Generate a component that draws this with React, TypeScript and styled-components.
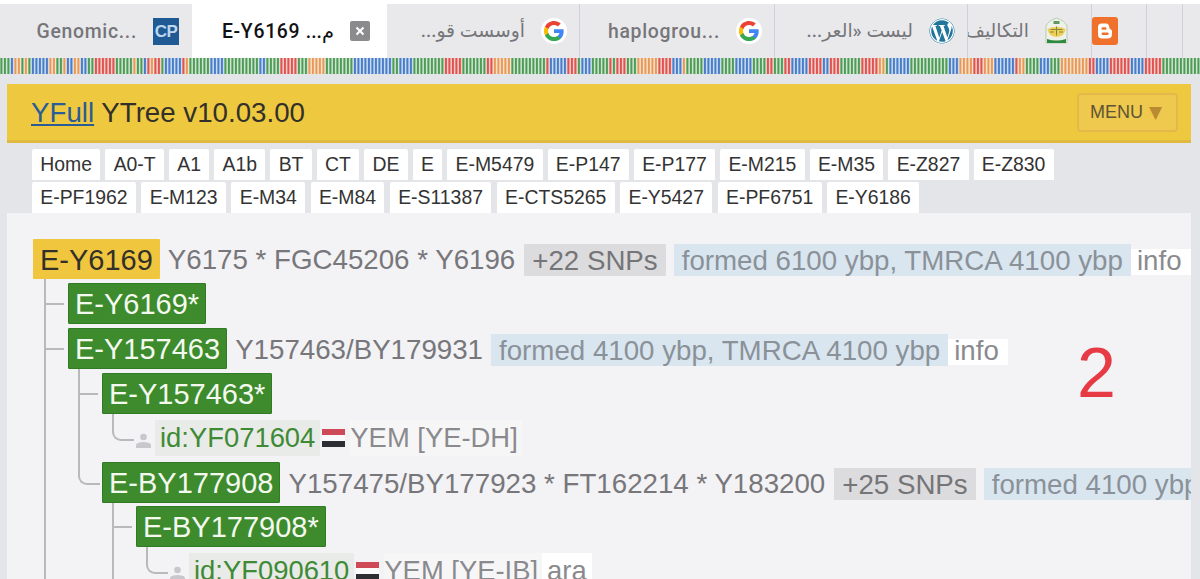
import React from "react";
import styled, { createGlobalStyle } from "styled-components";
import { FaWordpress } from "react-icons/fa";

const Global = createGlobalStyle`
  html, body { margin: 0; padding: 0; background: #e4e5e8; }
  body { font-family: "Liberation Sans", Arial, sans-serif; overflow: hidden; }
  * { box-sizing: border-box; }
`;

const Page = styled.div`
  width: 1200px;
  height: 579px;
  display: flex;
  flex-direction: column;
  overflow: hidden;
  background: #e4e5e8;
  padding-top: 4px;
  position: relative;
  &::before {
    content: "";
    position: absolute;
    top: 0;
    left: 0;
    right: 0;
    height: 4px;
    background: #fff;
  }
`;

/* ---------- browser tabs ---------- */
const TabBar = styled.div`
  display: flex;
  height: 54px;
  flex: none;
  background: #e9e9ec;
`;
const Tab = styled.div<{ $w: number; $pr: number; $active?: boolean; $sep?: boolean }>`
  flex: 0 0 ${(p) => p.$w}px;
  height: 54px;
  padding-right: ${(p) => p.$pr}px;
  display: flex;
  align-items: center;
  justify-content: flex-end;
  gap: 16px;
  overflow: hidden;
  background: ${(p) => (p.$active ? "#ffffff" : "transparent")};
  border-right: ${(p) => (p.$sep ? "1px solid #d2d2d6" : "none")};
`;
const TabLabel = styled.span<{ $active?: boolean; $arabic?: boolean }>`
  flex: none;
  font-family: Roboto, "Noto Sans", "DejaVu Sans", sans-serif;
  font-weight: 500;
  font-size: ${(p) => (p.$arabic ? 18.8 : 19.4)}px;
  letter-spacing: ${(p) => (p.$arabic ? 0 : 0.7)}px;
  white-space: nowrap;
  color: ${(p) => (p.$active ? "#111114" : "#76767a")};
`;
const FaviconCP = styled.div`
  flex: none;
  width: 26px;
  height: 27px;
  background: #1f5a94;
  color: #bcd6ee;
  font: bold 17px/27px "Liberation Sans", sans-serif;
  text-align: center;
  letter-spacing: -0.5px;
`;
const RoundFavicon = styled.div`
  flex: none;
  width: 26px;
  height: 26px;
  border-radius: 50%;
  background: #fff;
  display: flex;
  align-items: center;
  justify-content: center;
`;
const CloseBox = styled.div`
  flex: none;
  width: 20px;
  height: 20px;
  border-radius: 2px;
  background: #8b8b8d;
  display: flex;
  align-items: center;
  justify-content: center;
`;

const GoogleG = () => (
  <RoundFavicon>
    <svg width="22" height="22" viewBox="0 0 24 24">
      <path fill="#4285F4" d="M22.56 12.25c0-.78-.07-1.53-.2-2.25H12v4.26h5.92c-.26 1.37-1.04 2.53-2.21 3.31v2.77h3.57c2.08-1.92 3.28-4.74 3.28-8.09z" />
      <path fill="#34A853" d="M12 23c2.97 0 5.46-.98 7.28-2.66l-3.57-2.77c-.98.66-2.23 1.06-3.71 1.06-2.86 0-5.29-1.93-6.16-4.53H2.18v2.84C3.99 20.53 7.7 23 12 23z" />
      <path fill="#FBBC05" d="M5.84 14.09c-.22-.66-.35-1.36-.35-2.09s.13-1.43.35-2.09V7.07H2.18C1.43 8.55 1 10.22 1 12s.43 3.45 1.18 4.93l2.85-2.22.81-.62z" />
      <path fill="#EA4335" d="M12 5.38c1.62 0 3.06.56 4.21 1.64l3.15-3.15C17.45 2.09 14.97 1 12 1 7.7 1 3.99 3.47 2.18 7.07l3.66 2.84c.87-2.6 3.3-4.53 6.16-4.53z" />
    </svg>
  </RoundFavicon>
);

const SealIcon = () => (
  <svg width="23" height="28" viewBox="0 0 23 28" style={{ flex: "none" }}>
    <path d="M1 9 Q3 4 11.5 1 Q20 4 22 9 V26 H1 Z" fill="#eef2ea" stroke="#b5cdb0" strokeWidth="1" />
    <path d="M8.5 4 h6 v3 h-6 z" fill="#5d9a5e" />
    <path d="M2.5 12 Q11.5 7.5 20.5 12 Q20 19 11.5 20 Q3 19 2.5 12 Z" fill="#efcf58" />
    <path d="M5.5 12.5 h12 M11.5 9.5 v9" stroke="#7d8a40" strokeWidth="1" />
    <path d="M5 15 h4 M14 15 h4" stroke="#8d8a3c" strokeWidth="1.2" />
    <path d="M2 22 Q11.5 25 21 22 V26 H2 Z" fill="#2f8a3f" />
  </svg>
);

const BloggerIcon = () => (
  <svg width="26" height="28" viewBox="0 0 26 28" style={{ flex: "none" }}>
    <rect width="26" height="28" rx="3" fill="#f0712c" />
    <path d="M9.5 6.5 H14 Q17 6.5 17.2 10 Q17.3 12 18.5 12.3 Q20 12.6 20 14.5 V17 Q20 21.5 15.5 21.5 H10 Q6 21.5 6 17.5 V10 Q6 6.5 9.5 6.5 Z" fill="#fff" />
    <rect x="9.5" y="10.3" width="5" height="2.4" rx="1.2" fill="#f0712c" />
    <rect x="9.5" y="15.5" width="7.2" height="2.4" rx="1.2" fill="#f0712c" />
  </svg>
);

/* ---------- coloured sequence strip ---------- */
const StripWrap = styled.div`
  flex: none;
  height: 16px;
  line-height: 0;
`;
const COLORS: Record<string, [string, string]> = {
  G: ["#4f9b58", "#cfe6cf"],
  R: ["#dd5450", "#f8cdc8"],
  B: ["#4a7cc7", "#c8dcf4"],
  O: ["#e8985c", "#f8e3c4"],
};
const BAR = 3.5;
const makeBars = () => {
  const head = "GGGBOOGOGBBBBBOOGGOBBOOBBGGRRRRRRGGGGGOGGBRORRGBBBBBROGG";
  const out = head.split("");
  let s = 12345;
  const letters = "GRBGRBGRBO";
  while (out.length < 343) {
    s = (s * 1103515245 + 12345) & 0x7fffffff;
    const c = letters[(s >> 8) % letters.length];
    const run = 1 + ((s >> 16) % 5);
    for (let i = 0; i < run; i++) out.push(c);
  }
  for (let i = 335; i < 343; i++) out[i] = "G";
  return out.slice(0, 343);
};
const Strip = () => {
  const bars = makeBars();
  return (
    <StripWrap>
      <svg width="1200" height="16" viewBox="0 0 1200 16">
        {bars.map((c, i) => (
          <g key={i}>
            <rect x={i * BAR} y="0" width={BAR} height="16" fill={COLORS[c][1]} />
            <rect x={i * BAR + 0.4} y="0" width="2" height="16" fill={COLORS[c][0]} />
          </g>
        ))}
      </svg>
    </StripWrap>
  );
};

/* ---------- YFull header ---------- */
const Banner = styled.header`
  flex: none;
  margin: 10px 9px 0 7px;
  height: 59px;
  padding: 0 13px 0 24px;
  background: #eec940;
  border-bottom: 3px solid #e0b93f;
  display: flex;
  align-items: center;
  justify-content: space-between;
`;
const BannerTitle = styled.div`
  font-size: 27.7px;
  line-height: 34px;
  padding-top: 1px;
  color: #33302a;
`;
const BannerLink = styled.a`
  color: #2a5c96;
  text-decoration: underline;
`;
const MenuButton = styled.div`
  width: 101px;
  height: 39px;
  border: 2px solid #e2b94a;
  border-radius: 4px;
  background: #eec94e;
  color: #5f5434;
  font-size: 18px;
  display: flex;
  align-items: center;
  justify-content: center;
  gap: 6px;
  padding-right: 3px;
`;
const MenuArrow = styled.span`
  color: #b98a30;
  font-size: 17px;
  font-family: "DejaVu Sans", sans-serif;
`;

/* ---------- clade nav ---------- */
const Nav = styled.nav`
  flex: none;
  padding: 6px 0 0 32px;
  display: flex;
  flex-direction: column;
  gap: 2px;
`;
const NavRow = styled.div<{ $gap: number }>`
  display: flex;
  gap: ${(p) => p.$gap}px;
`;
const NavItem = styled.a`
  height: 31px;
  padding: 0 8.3px;
  background: #fff;
  border-radius: 2px 2px 0 0;
  color: #333;
  font-size: 19.4px;
  line-height: 30px;
  white-space: nowrap;
`;

/* ---------- tree panel ---------- */
const Panel = styled.main`
  flex: 1;
  margin: 0 9px 0 7px;
  padding: 26px 0 0 26px;
  background: #f3f2f5;
  position: relative;
  overflow: hidden;
`;
const BigNumber = styled.div`
  position: absolute;
  top: 125px;
  left: 1070px;
  font-size: 70px;
  line-height: 70px;
  color: #e63b45;
`;
const Row = styled.div<{ $line?: boolean }>`
  position: relative;
  display: flex;
  align-items: center;
  width: max-content;
  white-space: nowrap;
  ${(p) =>
    p.$line
      ? `&::before {
           content: "";
           position: absolute;
           left: -24px;
           top: 50%;
           width: 20px;
           height: 2px;
           margin-top: -1px;
           background: #b9b9bc;
         }`
      : ""}
`;
const Children = styled.div<{ $indent?: number }>`
  padding-left: ${(p) => p.$indent ?? 34}px;
`;
const Branch = styled.div<{ $gap: number; $drop?: number }>`
  position: relative;
  padding-top: ${(p) => p.$gap}px;
  &::after {
    content: "";
    position: absolute;
    left: -24px;
    top: 0;
    ${(p) =>
      p.$drop
        ? `height: ${p.$drop}px;
           width: 20px;
           border-left: 2px solid #b9b9bc;
           border-bottom: 2px solid #b9b9bc;
           border-bottom-left-radius: 9px;`
        : `bottom: 0;
           width: 2px;
           background: #b9b9bc;`}
  }
`;
const RootNode = styled.span`
  height: 40px;
  padding: 0 7px;
  background: #f0c63f;
  color: #33302a;
  font-size: 29px;
  line-height: 43px;
  border-radius: 1px;
`;
const Node = styled.span`
  height: 41px;
  padding: 0 6px;
  background: #3d8b2d;
  border: 1px solid #2f7c25;
  border-radius: 1px;
  color: #f4f9f0;
  font-size: 29px;
  line-height: 41px;
`;
const Snps = styled.span`
  margin-left: 8px;
  padding-top: 2px;
  color: #77777b;
  font-size: 27.7px;
`;
const SnpCount = styled.span`
  margin: 2px 0 0 9px;
  height: 32px;
  padding: 0 8px;
  background: #dcdcde;
  color: #757578;
  font-size: 27.7px;
  line-height: 34px;
`;
const Age = styled.span`
  margin: 2px 0 0 8px;
  height: 32px;
  padding: 0 8px;
  background: #d9e6f0;
  color: #8b9198;
  font-size: 27.7px;
  line-height: 34px;
`;
const Info = styled.span`
  margin-top: 6px;
  height: 26px;
  padding: 0 9px 0 6px;
  background: #fff;
  color: #8a8a8e;
  font-size: 27.7px;
  line-height: 23px;
`;
const Person = styled.svg`
  flex: none;
  width: 15px;
  height: 15px;
  margin-right: 4px;
  margin-top: 4px;
  fill: #c8c8cc;
`;
const SampleId = styled.span`
  height: 36px;
  padding: 0 5px;
  background: #e8ebe8;
  color: #3f8a35;
  font-size: 27.4px;
  line-height: 36px;
`;
const Flag = styled.svg`
  flex: none;
  width: 23px;
  height: 18px;
  margin: -1px 5px 0 2px;
`;
const Place = styled.span`
  height: 36px;
  padding-right: 4px;
  background: #f6f6f7;
  color: #8a8a8e;
  font-size: 27.4px;
  line-height: 36px;
`;
const Lang = styled.span`
  height: 36px;
  padding: 0 5px;
  background: #fff;
  color: #8a8a8e;
  font-size: 27.4px;
  line-height: 36px;
`;

const YemenFlag = () => (
  <Flag viewBox="0 0 23 18">
    <rect width="23" height="6" fill="#cf4a57" />
    <rect y="6" width="23" height="6" fill="#fafafa" />
    <rect y="12" width="23" height="6" fill="#2d2d34" />
  </Flag>
);

const PersonIcon = () => (
  <Person viewBox="0 0 15 15">
    <circle cx="7.5" cy="4" r="3.3" />
    <path d="M0 15 V12.5 Q0 10 3.5 9.5 L7.5 9 L11.5 9.5 Q15 10 15 12.5 V15 Z" />
  </Person>
);

const row1 = ["Home", "A0-T", "A1", "A1b", "BT", "CT", "DE", "E", "E-M5479", "E-P147", "E-P177", "E-M215", "E-M35", "E-Z827", "E-Z830"];
const row2 = ["E-PF1962", "E-M123", "E-M34", "E-M84", "E-S11387", "E-CTS5265", "E-Y5427", "E-PF6751", "E-Y6186"];

export default function App() {
  return (
    <Page>
      <Global />
      <TabBar>
        <Tab $w={192} $pr={13}>
          <TabLabel>Genomic...</TabLabel>
          <FaviconCP>CP</FaviconCP>
        </Tab>
        <Tab $w={195} $pr={17} $active>
          <TabLabel $active>
            E-Y6169 <span dir="rtl">م...</span>
          </TabLabel>
          <CloseBox>
            <svg width="12" height="12" viewBox="0 0 12 12">
              <path d="M2.5 2.5 L9.5 9.5 M9.5 2.5 L2.5 9.5" stroke="#fff" strokeWidth="2" />
            </svg>
          </CloseBox>
        </Tab>
        <Tab $w={193} $pr={12} $sep>
          <TabLabel $arabic dir="rtl">أوسست قو...</TabLabel>
          <GoogleG />
        </Tab>
        <Tab $w={195} $pr={12} $sep>
          <TabLabel>haplogrou...</TabLabel>
          <GoogleG />
        </Tab>
        <Tab $w={193} $pr={12} $sep>
          <TabLabel $arabic dir="rtl">ليست «العر...</TabLabel>
          <RoundFavicon>
            <FaWordpress size={26} color="#21759b" />
          </RoundFavicon>
        </Tab>
        <Tab $w={124} $pr={23} $sep>
          <TabLabel $arabic dir="rtl">التكاليف</TabLabel>
          <SealIcon />
        </Tab>
        <Tab $w={55} $pr={28} $sep>
          <BloggerIcon />
        </Tab>
        <Tab $w={36} $pr={0} $sep />
      </TabBar>
      <Strip />
      <Banner>
        <BannerTitle>
          <BannerLink>YFull</BannerLink> YTree v10.03.00
        </BannerTitle>
        <MenuButton>
          MENU <MenuArrow>▼</MenuArrow>
        </MenuButton>
      </Banner>
      <Nav>
        <NavRow $gap={5}>
          {row1.map((t) => (
            <NavItem key={t}>{t}</NavItem>
          ))}
        </NavRow>
        <NavRow $gap={5.5}>
          {row2.map((t) => (
            <NavItem key={t}>{t}</NavItem>
          ))}
        </NavRow>
      </Nav>
      <Panel>
        <BigNumber>2</BigNumber>
        <Row>
          <RootNode>E-Y6169</RootNode>
          <Snps>Y6175 * FGC45206 * Y6196</Snps>
          <SnpCount>+22 SNPs</SnpCount>
          <Age>formed 6100 ybp, TMRCA 4100 ybp</Age>
          <Info>info</Info>
        </Row>
        <Children $indent={35}>
          <Branch $gap={4}>
            <Row $line>
              <Node>E-Y6169*</Node>
            </Row>
          </Branch>
          <Branch $gap={4}>
            <Row $line>
              <Node>E-Y157463</Node>
              <Snps>Y157463/BY179931</Snps>
              <Age>formed 4100 ybp, TMRCA 4100 ybp</Age>
              <Info>info</Info>
            </Row>
            <Children>
              <Branch $gap={4}>
                <Row $line>
                  <Node>E-Y157463*</Node>
                </Row>
                <Children>
                  <Branch $gap={6} $drop={25}>
                    <Row>
                      <PersonIcon />
                      <SampleId>id:YF071604</SampleId>
                      <YemenFlag />
                      <Place>YEM [YE-DH]</Place>
                    </Row>
                  </Branch>
                </Children>
              </Branch>
              <Branch $gap={6} $drop={27}>
                <Row>
                  <Node>E-BY177908</Node>
                  <Snps>Y157475/BY177923 * FT162214 * Y183200</Snps>
                  <SnpCount>+25 SNPs</SnpCount>
                  <Age>formed 4100 ybp, TMRCA 4100 ybp</Age>
                </Row>
                <Children>
                  <Branch $gap={3}>
                    <Row $line>
                      <Node>E-BY177908*</Node>
                    </Row>
                    <Children>
                      <Branch $gap={6} $drop={25}>
                        <Row>
                          <PersonIcon />
                          <SampleId>id:YF090610</SampleId>
                          <YemenFlag />
                          <Place>YEM [YE-IB]</Place>
                          <Lang>ara</Lang>
                        </Row>
                      </Branch>
                    </Children>
                  </Branch>
                </Children>
              </Branch>
            </Children>
          </Branch>
        </Children>
      </Panel>
    </Page>
  );
}
